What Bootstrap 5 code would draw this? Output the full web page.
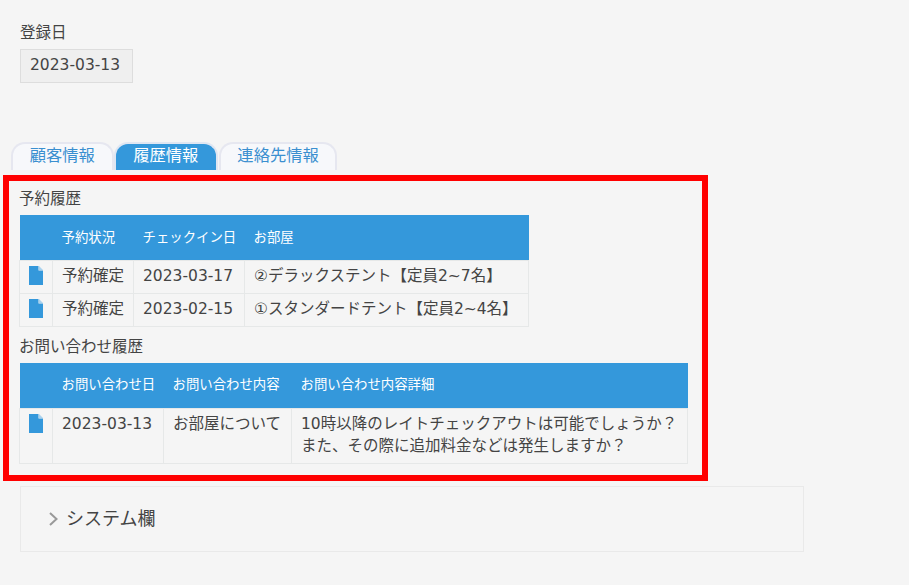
<!DOCTYPE html>
<html lang="ja">
<head>
<meta charset="utf-8">
<title>履歴情報</title>
<link href="https://cdn.jsdelivr.net/npm/bootstrap@5.3.0/dist/css/bootstrap.min.css" rel="stylesheet">
<style>
html,body{height:585px;overflow:hidden}
body{background:#f5f5f5;color:#444;font-family:"DejaVu Sans","Noto Sans CJK JP",sans-serif;font-size:15.5px;line-height:20px}
.page-wrap{padding:23px 0 0 0}
.reg-block{padding-left:20px;height:119px}
.reg-label{height:26px;line-height:20px}
.reg-value{display:inline-block;width:113px;height:34px;line-height:30px;padding-left:9px;background:#efefef;border:1px solid #ddd}
.tab-row{padding-left:11px;height:33px;gap:1px;margin:0;list-style:none}
.tab-item{height:28px;line-height:24px;padding:0 16.7px;background:#f7f8fb;border:2px solid #e6e7f0;border-bottom:0;border-radius:14px 14px 0 0;color:#3a8fd0;font-size:16.3px}
.tab-item.tab-on{background:#3498db;color:#fff;border-color:#dfe6f2;margin-left:-.6px;padding:0 17.3px}
.red-box{margin-left:3px;width:705px;height:306px;border:6px solid #f00;padding:8px 0 0 11px}
.sec-title{height:26px;line-height:20px;margin:0;margin-left:-1px}
.sec-title.second{padding-top:10px;height:36px}
.hist-table{border-collapse:collapse;table-layout:fixed;margin:0 0 0 -1px;width:509px}
.hist-table th{background:#3498db;color:#fff;font-weight:400;font-size:13.4px;height:45px;padding:1px 9px 0;border:0;vertical-align:middle;white-space:nowrap}
.hist-table.tall-head{width:668px}
.hist-table.tall-head th{height:46px;padding-top:0}
.hist-table td{border:1px solid #e6e8e8;padding:4px 9px 6px;height:33px;line-height:22px;vertical-align:top;white-space:nowrap;background:transparent;color:#444}
.hist-table td.ico-cell{padding:5px 0 0 9px}
.doc-ico{display:block;width:14px;height:19px}
.w-a{width:33px}.w-b{width:81px}.w-c{width:111px}.w-d{width:284px}
.w-e{width:111px}.w-f{width:128px}.w-g{width:396px}
.sys-panel{margin:5px 0 0 20px;width:784px;height:66px;border:1px solid #e9e9e9;padding-left:27px;font-size:18px;gap:7px}
.sys-chevron{width:11px;height:16px}
</style>
</head>
<body>
<div class="page-wrap">
  <div class="reg-block">
    <div class="reg-label">登録日</div>
    <div class="reg-value">2023-03-13</div>
  </div>
  <ul class="tab-row d-flex">
    <li class="tab-item">顧客情報</li>
    <li class="tab-item tab-on">履歴情報</li>
    <li class="tab-item">連絡先情報</li>
  </ul>
  <div class="red-box">
    <div class="sec-title">予約履歴</div>
    <table class="hist-table">
      <colgroup><col class="w-a"><col class="w-b"><col class="w-c"><col class="w-d"></colgroup>
      <thead><tr><th></th><th>予約状況</th><th>チェックイン日</th><th>お部屋</th></tr></thead>
      <tbody>
        <tr><td class="ico-cell"><svg class="doc-ico" viewBox="0 0 14 19"><path fill="#3498db" d="M0 0h9.5v4.5H14V19H0z"/><path fill="#a9d2ee" d="M10 0l4 4h-4z"/></svg></td><td>予約確定</td><td>2023-03-17</td><td>②デラックステント【定員2~7名】</td></tr>
        <tr><td class="ico-cell"><svg class="doc-ico" viewBox="0 0 14 19"><path fill="#3498db" d="M0 0h9.5v4.5H14V19H0z"/><path fill="#a9d2ee" d="M10 0l4 4h-4z"/></svg></td><td>予約確定</td><td>2023-02-15</td><td>①スタンダードテント【定員2~4名】</td></tr>
      </tbody>
    </table>
    <div class="sec-title second">お問い合わせ履歴</div>
    <table class="hist-table tall-head">
      <colgroup><col class="w-a"><col class="w-e"><col class="w-f"><col class="w-g"></colgroup>
      <thead><tr><th></th><th>お問い合わせ日</th><th>お問い合わせ内容</th><th>お問い合わせ内容詳細</th></tr></thead>
      <tbody>
        <tr><td class="ico-cell"><svg class="doc-ico" viewBox="0 0 14 19"><path fill="#3498db" d="M0 0h9.5v4.5H14V19H0z"/><path fill="#a9d2ee" d="M10 0l4 4h-4z"/></svg></td><td>2023-03-13</td><td>お部屋について</td><td>10時以降のレイトチェックアウトは可能でしょうか？<br>また、その際に追加料金などは発生しますか？</td></tr>
      </tbody>
    </table>
  </div>
  <div class="sys-panel d-flex align-items-center">
    <svg class="sys-chevron" viewBox="0 0 11 16"><path fill="none" stroke="#999" stroke-width="2" d="M2 2l6.5 6L2 14"/></svg>
    <span>システム欄</span>
  </div>
</div>
<script src="https://cdn.jsdelivr.net/npm/bootstrap@5.3.0/dist/js/bootstrap.bundle.min.js"></script>
</body>
</html>
